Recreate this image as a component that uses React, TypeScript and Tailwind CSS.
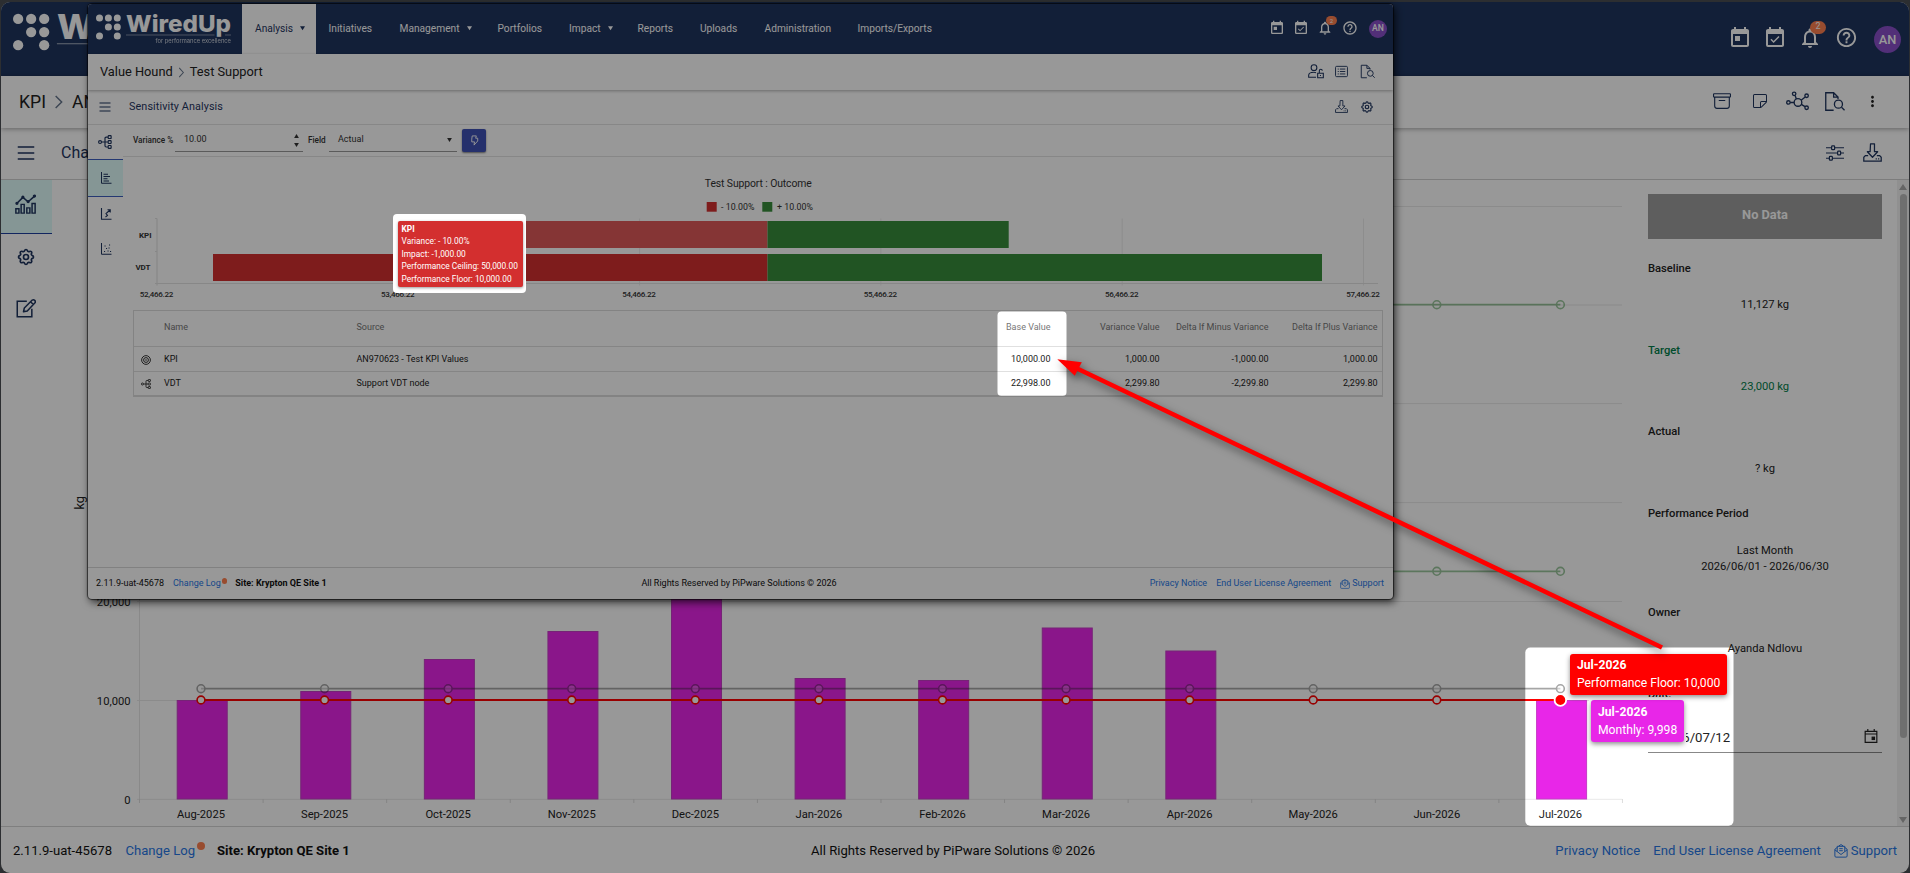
import type { ReactNode } from "react";
import { BsArchive, BsSticky } from "react-icons/bs";
import {
  MdEventAvailable,
  MdHelpOutline,
  MdMoreVert,
  MdNotificationsNone,
  MdToday,
} from "react-icons/md";
import { TbSettings } from "react-icons/tb";

type IconProps = { className?: string };

function Icon({
  className,
  width = 1.5,
  children,
}: IconProps & { width?: number; children: ReactNode }) {
  return (
    <svg
      viewBox="0 0 24 24"
      className={className}
      fill="none"
      stroke="currentColor"
      strokeWidth={width}
    >
      {children}
    </svg>
  );
}

const MenuIcon = ({ className }: IconProps) => (
  <Icon className={className} width={2.2}>
    <path d="M1 4h22M1 12h22M1 20h22" />
  </Icon>
);

const FileSearchIcon = ({ className }: IconProps) => (
  <Icon className={className} width={1.5}>
    <path d="M11 22H2V2h9l5 5v2M11 2v5h5" />
    <circle cx="16.5" cy="15" r="4.6" />
    <path d="M20 18.5l3.5 3.5" />
  </Icon>
);

const NetworkIcon = ({ className }: IconProps) => (
  <Icon className={className} width={1.4}>
    <circle cx="12.5" cy="13" r="4" />
    <circle cx="2.5" cy="13" r="1.8" />
    <circle cx="8.5" cy="4" r="1.8" />
    <circle cx="21.5" cy="6" r="1.8" />
    <circle cx="21.5" cy="18.5" r="1.8" />
    <path d="M4.3 13h4.2M9.5 5.6l1.3 3.8M15.8 10.6L20 7.2M16 15l3.8 2.4" />
  </Icon>
);

const SlidersIcon = ({ className }: IconProps) => (
  <Icon className={className} width={1.6}>
    <path d="M0 5h7M12 5h12M0 12h15M20 12h4M0 19h4M9 19h15" />
    <rect x="7.5" y="2.5" width="4" height="5" rx="1" />
    <rect x="15.5" y="9.5" width="4" height="5" rx="1" />
    <rect x="4.5" y="16.5" width="4" height="5" rx="1" />
  </Icon>
);

const DownloadIcon = ({ className }: IconProps) => (
  <Icon className={className} width={1.6}>
    <path d="M9.5 1h5v10h4L12 18l-6.500-7h3.500z" strokeLinejoin="round" />
    <path d="M6.5 16H3l-2 2v5h22v-5l-2-2h-3.5M16 20h1.5M19 20h1.5" />
  </Icon>
);

const TrendIcon = ({ className }: IconProps) => (
  <Icon className={className} width={1.7}>
    <path d="M1 23v-5h3.5v5zM7 23V13h3.5v10zM13.5 23v-6H17v6zM19.5 23V12H23v11z" />
    <path d="M2 12l7-7 6 5 8-7" />
    <circle cx="2.2" cy="11.8" r="1" />
    <circle cx="9" cy="4.8" r="1" />
    <circle cx="15" cy="9.8" r="1" />
    <circle cx="22.2" cy="3.5" r="1" />
  </Icon>
);

const EditIcon = ({ className }: IconProps) => (
  <Icon className={className} width={1.8}>
    <path d="M13 4H1.5v18.5H19V13" />
    <path
      d="M9 16.5l1-4.5 9.5-9.5a2.4 2.4 0 0 1 3.3 3.3l-9.3 9.7zM17.5 4.5l3.3 3.3"
      strokeLinejoin="round"
    />
  </Icon>
);

const TreeIcon = ({ className }: IconProps) => (
  <Icon className={className} width={2}>
    <circle cx="3.5" cy="12" r="2.5" />
    <rect x="17.5" y="1" width="5" height="5" rx="1" />
    <rect x="17.5" y="9.5" width="5" height="5" rx="1" />
    <rect x="17.5" y="18" width="5" height="5" rx="1" />
    <path d="M6 12h11M17 3.5h-3a2 2 0 0 0-2 2v13a2 2 0 0 0 2 2h3" />
  </Icon>
);

const TornadoIcon = ({ className }: IconProps) => (
  <Icon className={className} width={2}>
    <path d="M3 0v22.5h20M7 4.5h9M7 9h13M7 13.5h8M7 18h11" />
  </Icon>
);

const SpiderIcon = ({ className }: IconProps) => (
  <Icon className={className} width={2.2}>
    <path d="M3 0v22.5h20" />
    <path d="M11 18l4-3-3-4 8-7M15 3.5h5.5V9" />
  </Icon>
);

const ScatterIcon = ({ className }: IconProps) => (
  <Icon className={className} width={2}>
    <path d="M3 0v22.5h20M8 17h2.2M12 11h2.2M9 6h2.2M18 4h2.2M17 10h2.2M15 16h2.2M20 17h2.2" />
  </Icon>
);

const UserLockIcon = ({ className }: IconProps) => (
  <Icon className={className} width={1.6}>
    <circle cx="9" cy="7" r="4.3" />
    <path d="M12 21.5H1v-3C1 15.500 4 14 9 14c1 0 2 0 3 .5M14.5 15.5H23V22h-8.5zM17 15.500V11.500a2.200 2.200 0 0 1 4.400 0" />
    <path d="M18.700 18v1.500" />
  </Icon>
);

const ListIcon = ({ className }: IconProps) => (
  <Icon className={className} width={1.7}>
    <rect x="1" y="2.5" width="22" height="19" rx="2" />
    <path d="M5 7.500h2M9 7.500h10M5 12h2M9 12h10M5 16.500h2M9 16.500h10" />
  </Icon>
);

const TargetIcon = ({ className }: IconProps) => (
  <Icon className={className} width={2.2}>
    <circle cx="12" cy="12" r="10.5" />
    <circle cx="12" cy="12" r="5.800" />
    <circle cx="12" cy="12" r=".8" />
  </Icon>
);

const BoltIcon = ({ className }: IconProps) => (
  <Icon className={className} width={2}>
    <path d="M7 2h9l-1.500 5H19v6l-8 9 1-7H6V9z" strokeLinejoin="round" />
  </Icon>
);

const MailIcon = ({ className }: IconProps) => (
  <Icon className={className} width={1.7}>
    <path d="M1.5 9L6 5.500M22.5 9L18 5.500M1.5 9v11.500a2 2 0 0 0 2 2h17a2 2 0 0 0 2-2V9M1.5 10L12 18l10.500-8M8 3.500L12 1l4 2.500M5.500 13V4h13v9M9 8h6M9 11.500h6" />
  </Icon>
);

const CalendarIcon = ({ className }: IconProps) => (
  <Icon className={className} width={2}>
    <path d="M2 4h20v19H2zM2 8.5h20M6.5 0v4M17.5 0v4" />
    <rect x="14" y="14" width="4" height="4" fill="currentColor" />
  </Icon>
);

function Logo({ className }: IconProps) {
  const dots = [
    [99.5, 18], [108.4, 18], [117.3, 18],
    [108.4, 27], [117.3, 27],
    [99.5, 36], [117.3, 36],
  ];
  return (
    <svg viewBox="96 12 136 34" className={className} fill="#fff">
      {dots.map(([x, y]) => (
        <circle key={`${x}-${y}`} cx={x} cy={y} r="3.5" />
      ))}
      <text
        x="126" y="31.5" fontSize="23.5" fontWeight="800" textLength="105"
        lengthAdjust="spacingAndGlyphs" fontFamily="Inter, sans-serif"
      >
        WiredUp
      </text>
      <path d="M126 35h88.5M225 35h6" stroke="#fff" strokeWidth=".7" opacity=".6" />
      <text
        x="155.5" y="43.2" fontSize="5.6" textLength="75.5" opacity=".75"
        lengthAdjust="spacingAndGlyphs" fontFamily="Inter, sans-serif"
      >
        for performance excellence
      </text>
    </svg>
  );
}

/* ---------- KPI page (back window) ---------- */

const months = [
  { label: "Aug-2025", top: 700 },
  { label: "Sep-2025", top: 691 },
  { label: "Oct-2025", top: 659 },
  { label: "Nov-2025", top: 631 },
  { label: "Dec-2025", top: 590 },
  { label: "Jan-2026", top: 678 },
  { label: "Feb-2026", top: 680 },
  { label: "Mar-2026", top: 627.5 },
  { label: "Apr-2026", top: 650.5 },
  { label: "May-2026" },
  { label: "Jun-2026" },
  { label: "Jul-2026", top: 700 },
];
const STEP = 123.58;
const monthX = (i: number) => 201 + i * STEP;

function KpiChart() {
  const lines = [
    { y: 304.7, stroke: "#388e3c", opacity: 0.5, fill: "none" },
    { y: 571.3, stroke: "#388e3c", opacity: 0.5, fill: "none" },
    { y: 688.7, stroke: "#222", opacity: 0.4, fill: "#ffffff80" },
    { y: 700, stroke: "#ff0000", opacity: 1, fill: "#fff" },
  ];
  return (
    <svg
      viewBox="52 180 1596 646"
      className="h-[646px] w-[1596px] shrink-0"
      fontFamily="Roboto, sans-serif"
      fontSize="11.2"
      fill="#222"
    >
      {[206.5, 305, 403.6, 502.6, 601.5, 700.5, 799.3].map((y) => (
        <path key={y} d={`M137 ${y}H1622`} stroke="#e9e9e9" />
      ))}
      <path d="M139.5 206V802" stroke="#e6e6e6" />
      {Array.from({ length: 13 }, (_, i) => (
        <path key={i} d={`M${139.5 + i * STEP} 799v4`} stroke="#ddd" />
      ))}
      <text x="130.5" y="606" textAnchor="end">20,000</text>
      <text x="130.5" y="705" textAnchor="end">10,000</text>
      <text x="130.5" y="803.5" textAnchor="end">0</text>
      <text transform="translate(84 509.5) rotate(-90)" fontSize="12.8">kg</text>
      {months.map(
        (m, i) =>
          m.top && (
            <rect
              key={m.label} x={monthX(i) - 23.8} y={m.top + 0.5}
              width="50" height={798.5 - m.top}
              fill="#e826e8" stroke="#c63cc6"
            />
          )
      )}
      {lines.map((l) => (
        <g key={l.y} stroke={l.stroke} opacity={l.opacity}>
          <path d={`M201 ${l.y}H${monthX(11)}`} strokeWidth="1.8" />
          {months.map((m, i) => (
            <circle key={m.label} cx={monthX(i)} cy={l.y} r="3.9" fill={l.fill} strokeWidth="1.6" />
          ))}
        </g>
      ))}
      <circle cx={monthX(11)} cy="700" r="5.8" fill="#f00" stroke="#fff" strokeWidth="1.8" />
      {months.map((m, i) => (
        <text key={m.label} x={monthX(i)} y="818.2" textAnchor="middle">{m.label}</text>
      ))}
    </svg>
  );
}

function Field({ label, className, children }: { label: string; className: string; children: ReactNode }) {
  return (
    <div className={className}>
      <div className="font-medium">{label}</div>
      <div className="text-center">{children}</div>
    </div>
  );
}

function KpiPanel() {
  return (
    <aside className="w-[234px] shrink-0 pt-[14px] text-[11.2px] leading-4 text-[#222]">
      <div className="flex h-[45px] items-center justify-center bg-[#9e9e9e] pb-1 text-[12.8px] font-bold text-white">
        No Data
      </div>
      <Field label="Baseline" className="mt-[22px] grid h-[82px] content-start gap-[20px]">11,127 kg</Field>
      <Field label="Target" className="grid h-[81px] content-start gap-[20px] text-[#00804a]">23,000 kg</Field>
      <Field label="Actual" className="grid h-[82px] content-start gap-[21px]">? kg</Field>
      <Field label="Performance Period" className="grid h-[99px] content-start gap-[21px]">
        Last Month
        <br />
        2026/06/01 - 2026/06/30
      </Field>
      <Field label="Owner" className="grid h-[82px] content-start gap-[20px]">Ayanda Ndlovu</Field>
      <div className="font-medium">Date</div>
      <div className="mt-[22px] flex h-[28px] items-start justify-between border-b border-[#888] pr-1 pl-[12px] text-[13.2px] leading-[25px]">
        2026/07/12
        <CalendarIcon className="mt-1 size-[14px]" />
      </div>
    </aside>
  );
}

function HeaderIcons() {
  return (
    <div className="flex items-center pb-[3px] text-[24px] text-white">
      <div className="flex w-[35px] justify-center pr-[2px]"><MdToday /></div>
      <div className="flex w-[35px] justify-center pr-[2px]"><MdEventAvailable /></div>
      <div className="relative flex w-[35px] justify-center pr-[2px]">
        <MdNotificationsNone />
        <span className="absolute -top-[5px] left-[17px] flex h-[13px] w-[16px] items-center justify-center rounded-full bg-[#ff8050] text-[9px]">2</span>
      </div>
      <div className="flex w-[38px] justify-center pr-[2px]"><MdHelpOutline className="size-[23px]" /></div>
      <div className="flex w-[43px] justify-center pt-[4px]">
        <div className="flex size-[27px] items-center justify-center rounded-full bg-[#8a4fc9] text-[12.8px] font-medium">AN</div>
      </div>
    </div>
  );
}

function KpiWindow() {
  return (
    <div className="isolate flex h-[871px] w-[1908px] flex-col overflow-hidden rounded-[9px] bg-white">
      <header className="flex h-[74px] shrink-0 items-center justify-between bg-[#1f355f]">
        <Logo className="mb-[8px] ml-[12px] h-[50px] w-[199px]" />
        <HeaderIcons />
      </header>
      <div className="z-10 flex h-[52px] shrink-0 items-center px-[18px] text-[17.6px] text-[#222] shadow-[0_1px_5px_rgba(0,0,0,0.35)]">
        <span>KPI</span>
        <Icon className="mx-[5px] size-[16px] text-[#66768c]" width={2.2}><path d="M7 3l9 9-9 9" /></Icon>
        <span className="flex-1">AN970623</span>
        <div className="flex items-center pb-[2px] text-[#1f355f]">
          <div className="flex w-[37.5px] justify-center"><BsArchive className="size-[18px]" /></div>
          <div className="flex w-[37.5px] justify-center"><BsSticky className="size-[16px]" /></div>
          <div className="flex w-[37.5px] justify-center"><NetworkIcon className="size-[23px]" /></div>
          <div className="flex w-[37.5px] justify-center"><FileSearchIcon className="size-[21px]" /></div>
          <div className="flex w-[37.5px] justify-center text-[#222]"><MdMoreVert className="size-[17px]" /></div>
        </div>
      </div>
      <div className="flex h-[52px] shrink-0 items-center border-b border-[#d0d0d0] pr-[18px] pb-[2px] text-[16px] text-[#1f355f]">
        <div className="flex h-full w-[51px] items-center justify-center pr-[2px]">
          <MenuIcon className="h-[18px] w-[18px]" />
        </div>
        <span className="flex-1 pl-[9px]">Chart</span>
        <div className="flex w-[37.5px] justify-center"><SlidersIcon className="size-[18px]" /></div>
        <div className="flex w-[37.5px] justify-center"><DownloadIcon className="size-[19px]" /></div>
      </div>
      <div className="flex h-[646px] shrink-0 text-[#1f355f]">
        <nav className="flex w-[51px] shrink-0 flex-col items-center">
          <div className="flex h-[54px] w-full items-center justify-center border-b border-[#1f3fa0] bg-[#e0fbfa] pr-[2px] pb-[6px]">
            <TrendIcon className="size-[21px]" />
          </div>
          <div className="flex h-[45px] items-center pr-[2px]"><TbSettings className="size-[20px]" /></div>
          <div className="flex h-[58px] items-center pr-[2px]"><EditIcon className="size-[20px]" /></div>
        </nav>
        <KpiChart />
        <KpiPanel />
        <div className="ml-[15px] flex w-[12px] flex-col items-center bg-[#f1f1f1] pt-[4px]">
          <svg viewBox="0 0 8 6" className="h-[6px] w-[8px]"><path d="M4 0l4 6H0z" fill="#aaa" /></svg>
          <div className="mt-[4px] h-[544px] w-[7px] rounded-full bg-[#bbb]" />
          <svg viewBox="0 0 8 6" className="mt-[79px] h-[6px] w-[8px]"><path d="M4 6l4-6H0z" fill="#aaa" /></svg>
        </div>
      </div>
      <footer className="flex flex-1 items-center border-t border-[#d6d6d6] pt-[2px] text-[13.1px] text-[#111]">
        <div className="flex w-[797px] items-center pl-[12px]">
          <span className="w-[112.5px]">2.11.9-uat-45678</span>
          <span className="text-[#2878e6]">Change Log</span>
          <span className="mr-[12px] mb-[9px] ml-[2px] size-[8px] rounded-full bg-[#ff8050]" />
          <span className="font-bold">Site: Krypton QE Site 1</span>
        </div>
        <span className="w-[310px] text-center">All Rights Reserved by PiPware Solutions © 2026</span>
        <div className="flex flex-1 items-center justify-end gap-[13px] pr-[12px] text-[#2878e6]">
          <span className="tracking-[0.1px]">Privacy Notice</span>
          <span>End User License Agreement</span>
          <span className="flex items-center gap-[3px]"><MailIcon className="size-[14px]" />Support</span>
        </div>
      </footer>
    </div>
  );
}

/* ---------- Sensitivity analysis (front window) ---------- */

const navItems = [
  { label: "Analysis", width: "w-[73.5px]", arrow: true, active: true },
  { label: "Initiatives", width: "w-[71px]" },
  { label: "Management", width: "w-[98px]", arrow: true },
  { label: "Portfolios", width: "w-[71.5px]" },
  { label: "Impact", width: "w-[68.5px]", arrow: true },
  { label: "Reports", width: "w-[62.5px]" },
  { label: "Uploads", width: "w-[64.5px]" },
  { label: "Administration", width: "w-[93px]" },
  { label: "Imports/Exports", width: "w-[102px]" },
];

const Caret = ({ className }: IconProps) => (
  <svg viewBox="0 0 6 5" className={className} fill="currentColor"><path d="M0 0h6L3 5z" /></svg>
);

function OutcomeChart() {
  const ticks = ["52,466.22", "53,466.22", "54,466.22", "55,466.22", "56,466.22", "57,466.22"];
  return (
    <svg
      viewBox="123 157 1270 153"
      className="h-[153px] w-[1270px] shrink-0"
      fontFamily="Roboto, sans-serif"
      fontSize="8"
      fontWeight="500"
      fill="#333"
    >
      <text x="758.3" y="186.500" fontSize="10.4" fontWeight="400" textAnchor="middle" textLength="107">Test Support : Outcome</text>
      <rect x="706.7" y="202" width="10" height="9.7" fill="#d32f2f" />
      <text x="721" y="210.3" fontSize="8.8" fontWeight="400" textLength="33.5">- 10.00%</text>
      <rect x="762.3" y="202" width="10" height="9.7" fill="#388e3c" />
      <text x="777" y="210.3" fontSize="8.8" fontWeight="400" textLength="36">+ 10.00%</text>
      {ticks.map((t, i) => (
        <g key={t}>
          <path d={`M${157 + i * 241.3} 218.5v67`} stroke={i === 0 ? "#ddd" : "#ececec"} />
          <text x={156.5 + i * 241.3} y="296.5" textAnchor="middle" textLength="33.5">{t}</text>
        </g>
      ))}
      <path d="M155 283.5h1223M155 218.5h2M155 251.5h2" stroke="#e2e2e2" />
      <text x="151.5" y="237.8" textAnchor="end" fontWeight="700">KPI</text>
      <text x="150.5" y="270.2" textAnchor="end" fontWeight="700">VDT</text>
      <rect x="526" y="221" width="241.5" height="27" fill="#df5a5a" />
      <rect x="767.5" y="221" width="241.2" height="27" fill="#388e3c" />
      <rect x="213" y="254" width="554.5" height="27" fill="#d32f2f" />
      <rect x="767.5" y="254" width="554.5" height="27" fill="#388e3c" />
    </svg>
  );
}

const rows = [
  { icon: <TargetIcon className="size-[10px]" />, cells: ["KPI", "AN970623 - Test KPI Values", "10,000.00", "1,000.00", "-1,000.00", "1,000.00"] },
  { icon: <TreeIcon className="size-[10px]" />, cells: ["VDT", "Support VDT node", "22,998.00", "2,299.80", "-2,299.80", "2,299.80"] },
];

const columns = "grid grid-cols-[30px_192.5px_585px_109px_109px_109px_109px] items-center";

function OutcomeTable() {
  const heads = ["Name", "Source", "Base Value", "Variance Value", "Delta If Minus Variance", "Delta If Plus Variance"];
  return (
    <div className="ml-[10px] h-[86.5px] w-[1250px] shrink-0 border border-b-2 border-[#dcdcdc] text-[9px] text-[#222]">
      <div className={`${columns} h-[36px] border-b border-[#e0e0e0] pb-[1px] text-[#777]`}>
        <span />
        {heads.map((h, i) => (
          <span key={h} className={i > 1 ? "text-right" : ""}>{h}</span>
        ))}
      </div>
      {rows.map((r, n) => (
        <div key={n} className={n === 0 ? `${columns} h-[25px] border-b border-[#e0e0e0] pt-[1px]` : `${columns} h-[24px]`}>
          <span className="pl-[7px]">{r.icon}</span>
          {r.cells.map((c, i) => (
            <span key={i} className={i > 1 ? "text-right" : ""}>{c}</span>
          ))}
        </div>
      ))}
    </div>
  );
}

function AnalysisWindow() {
  return (
    <section className="absolute top-[4px] left-[88px] z-10 flex h-[595px] w-[1305px] flex-col overflow-hidden rounded-[4px] bg-white shadow-[0_0_1px_1px_rgba(0,0,0,0.6),2px_3px_9px_rgba(0,0,0,0.75)]">
      <header className="flex h-[50px] shrink-0 bg-[#1f355f] text-[10.2px] text-white">
        <div className="w-[154px]"><Logo className="mt-[8px] ml-[8px] h-[34px] w-[136px]" /></div>
        {navItems.map((item) => (
          <div
            key={item.label}
            className={`flex items-center pb-[1px] pl-[13px] ${item.width} ${item.active ? "bg-white text-[#1f355f]" : ""}`}
          >
            {item.label}
            {item.arrow && <Caret className="ml-[7px] h-[4.5px] w-[5px]" />}
          </div>
        ))}
        <div className="flex flex-1 items-center justify-end pb-[3px] text-[16px]">
          <div className="flex w-[24px] justify-center"><MdToday /></div>
          <div className="flex w-[24px] justify-center"><MdEventAvailable /></div>
          <div className="relative flex w-[24px] justify-center">
            <MdNotificationsNone />
            <span className="absolute -top-[4px] left-[13px] flex h-[9px] w-[11px] items-center justify-center rounded-full bg-[#ff8050] text-[6px]">2</span>
          </div>
          <div className="flex w-[26px] justify-center"><MdHelpOutline /></div>
          <div className="flex w-[30px] justify-center pt-[2px]">
            <div className="flex size-[18px] items-center justify-center rounded-full bg-[#8a4fc9] text-[8.6px] font-medium">AN</div>
          </div>
        </div>
      </header>
      <div className="z-10 flex h-[36px] shrink-0 items-center pr-[13px] pl-[12px] text-[12.8px] text-[#222] shadow-[0_1px_3px_rgba(0,0,0,0.3)]">
        Value Hound
        <Icon className="mx-[3px] size-[11px] text-[#66768c]" width={2.2}><path d="M7 2l9 10-9 10" /></Icon>
        <span className="flex-1">Test Support</span>
        <div className="flex items-center pb-[2px] text-[#1f355f]">
          <div className="flex w-[25.5px] justify-center"><UserLockIcon className="size-[16px]" /></div>
          <div className="flex w-[25.5px] justify-center"><ListIcon className="size-[13px]" /></div>
          <div className="flex w-[25.5px] justify-center"><FileSearchIcon className="size-[15px]" /></div>
        </div>
      </div>
      <div className="flex h-[35px] shrink-0 items-center border-b border-[#e2e2e2] pr-[13px] text-[10.8px] text-[#1f355f]">
        <div className="flex h-full w-[35px] items-center justify-center pr-[1px] pb-[1px]">
          <MenuIcon className="size-[12px]" />
        </div>
        <span className="flex-1 pt-[1px] pl-[6px] tracking-[0.1px]">Sensitivity Analysis</span>
        <div className="flex w-[25.5px] justify-center pb-[1px]"><DownloadIcon className="size-[13px]" /></div>
        <div className="flex w-[25.5px] justify-center pb-[1px]"><TbSettings className="size-[14px]" /></div>
      </div>
      <div className="flex min-h-0 flex-1">
        <nav className="flex w-[35px] shrink-0 flex-col items-center text-[#1f355f]">
          <div className="flex h-[34px] items-center pr-[1px]"><TreeIcon className="size-[14px]" /></div>
          <div className="flex h-[38px] w-full items-center justify-center border-y border-[#3f5fc0] bg-[#e0fbfa]">
            <TornadoIcon className="size-[12px]" />
          </div>
          <div className="flex h-[34px] items-center"><SpiderIcon className="size-[12px]" /></div>
          <div className="flex h-[35px] items-center"><ScatterIcon className="size-[12px]" /></div>
        </nav>
        <div className="flex w-[1270px] flex-col">
          <div className="flex h-[32px] shrink-0 items-center border-b border-[#e2e2e2] pl-[10px] text-[9px] text-[#333]">
            <span className="w-[42px] text-[8.2px] font-medium">Variance %</span>
            <div className="flex h-[22px] w-[128px] items-center justify-between border-b border-[#999] pr-[4px] pl-[9px]">
              10.00
              <span className="flex flex-col gap-[5px]">
                <Caret className="h-[4px] w-[5px] rotate-180" />
                <Caret className="h-[4px] w-[5px]" />
              </span>
            </div>
            <span className="ml-[5px] w-[21px] text-[8.2px] font-medium">Field</span>
            <div className="flex h-[22px] w-[128px] items-center justify-between border-b border-[#999] pr-[5px] pl-[9px]">
              Actual
              <Caret className="h-[4px] w-[5px]" />
            </div>
            <div className="ml-[5px] flex h-[23px] w-[24px] items-center justify-center rounded-[2px] bg-[#3f51b5] text-white shadow-[0_1px_2px_rgba(0,0,0,0.5)]">
              <BoltIcon className="size-[11px]" />
            </div>
          </div>
          <OutcomeChart />
          <OutcomeTable />
        </div>
      </div>
      <footer className="flex h-[32px] shrink-0 items-center border-t border-[#d8d8d8] pt-[1px] text-[9px] text-[#111]">
        <div className="flex w-[551px] items-center pl-[8px]">
          <span className="w-[77px]">2.11.9-uat-45678</span>
          <span className="text-[#2878e6]">Change Log</span>
          <span className="mr-[8px] mb-[6px] ml-[1px] size-[5.5px] rounded-full bg-[#ff8050]" />
          <span className="font-bold">Site: Krypton QE Site 1</span>
        </div>
        <span className="w-[200px] text-center">All Rights Reserved by PiPware Solutions © 2026</span>
        <div className="flex flex-1 items-center justify-end gap-[9px] pr-[9px] text-[#2878e6]">
          <span>Privacy Notice</span>
          <span>End User License Agreement</span>
          <span className="flex items-center gap-[2px]"><MailIcon className="size-[10px]" />Support</span>
        </div>
      </footer>
    </section>
  );
}

/* ---------- Annotations ---------- */

// dims the whole screen except for the two highlighted areas
function Spotlight() {
  return (
    <svg viewBox="0 0 1910 873" className="pointer-events-none absolute inset-0 z-20 h-[873px] w-[1910px]">
      <defs>
        <mask id="holes">
          <rect width="1910" height="873" fill="#fff" />
          <rect x="997.5" y="311.5" width="69" height="84.5" rx="4" fill="#000" />
          <rect x="1525.3" y="647.5" width="208.2" height="178.3" rx="5" fill="#000" />
        </mask>
      </defs>
      <rect width="1910" height="873" fill="#000" opacity=".4" mask="url(#holes)" />
    </svg>
  );
}

function Arrow() {
  return (
    <svg viewBox="0 0 1910 873" className="pointer-events-none absolute inset-0 z-40 h-[873px] w-[1910px] drop-shadow-[2px_4px_4px_rgba(0,0,0,0.5)]">
      <path d="M1662 647.5L1076 368" stroke="#f00" strokeWidth="4.6" />
      <path d="M1057.3 359.2L1081.8 362.2L1074.8 375.8z" fill="#f00" />
    </svg>
  );
}

export default function App() {
  return (
    <main className="relative h-[873px] w-[1910px] overflow-hidden bg-[#4b4e52] pt-[2px] pl-[1px] font-[Roboto,sans-serif]">
      <KpiWindow />
      <AnalysisWindow />
      <Spotlight />

      <div className="absolute top-[214px] left-[392.5px] z-30 h-[78.5px] w-[133px] rounded-[4px] bg-white pt-[7px] pl-[5px]">
        <div className="h-[65.5px] w-[125.5px] rounded-[2px] bg-[#d32f2f] pt-[1.5px] pl-[4px] text-[8.35px] leading-[12.5px] whitespace-nowrap text-white shadow-[0_1px_3px_rgba(0,0,0,0.4)]">
          <div className="font-bold">KPI</div>
          <div>Variance: - 10.00%</div>
          <div>Impact: -1,000.00</div>
          <div>Performance Ceiling: 50,000.00</div>
          <div>Performance Floor: 10,000.00</div>
        </div>
      </div>

      <div className="absolute top-[697px] left-[1589px] z-30 h-[47px] w-[97px] bg-white pt-[3px] pl-[2px]">
        <div className="h-[42px] w-[93px] rounded-[3px] bg-[#e826e8] pt-[3px] pl-[7px] text-[12.15px] leading-[18px] whitespace-nowrap text-white shadow-[0_2px_5px_rgba(0,0,0,0.45)]">
          <div className="font-bold">Jul-2026</div>
          <div>Monthly: 9,998</div>
        </div>
      </div>
      <div className="absolute top-[654px] left-[1570px] z-30 h-[41px] w-[157px] rounded-[3px] bg-[#f00] pt-[2px] pl-[7px] text-[12.15px] leading-[18px] whitespace-nowrap text-white shadow-[0_2px_5px_rgba(0,0,0,0.45)]">
        <div className="font-bold">Jul-2026</div>
        <div>Performance Floor: 10,000</div>
      </div>
      <Arrow />
    </main>
  );
}
